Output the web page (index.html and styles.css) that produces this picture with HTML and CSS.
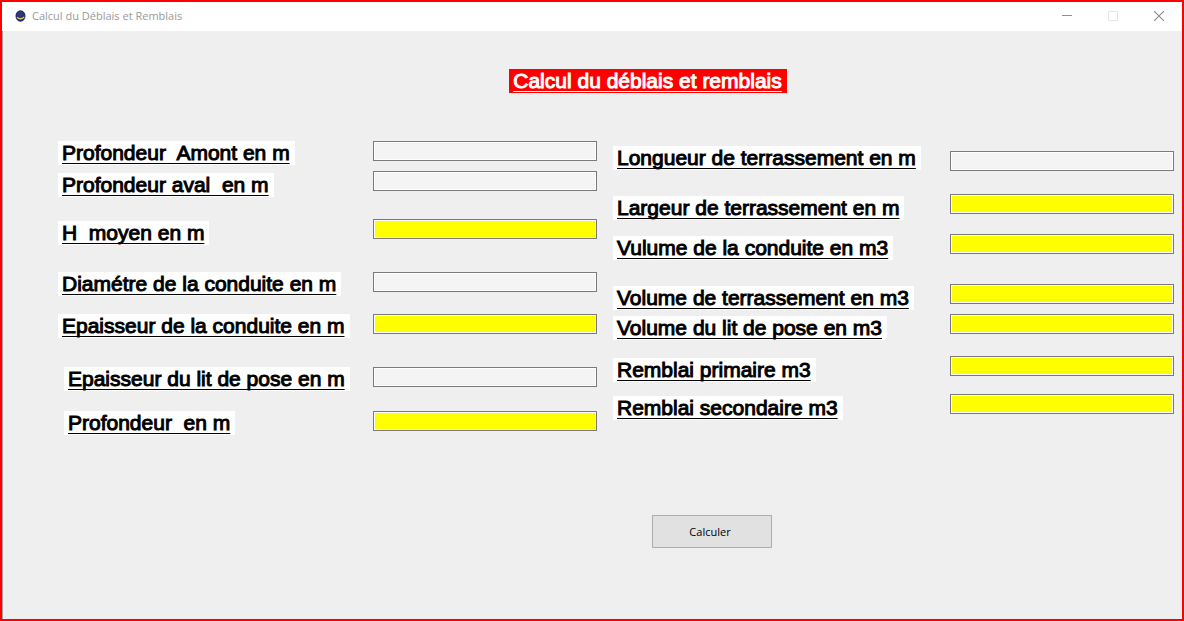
FILE: index.html
```html
<!DOCTYPE html>
<html lang="fr">
<head>
<meta charset="utf-8">
<title>Calcul du Déblais et Remblais</title>
<link rel="stylesheet" href="styles.css">
</head>
<body>
<div class="window">
  <header class="titlebar">
    <svg class="app-icon" viewBox="0 0 11 12" aria-hidden="true">
      <ellipse cx="5.5" cy="6" rx="5" ry="5.8" fill="#2a2a7c"/>
      <circle cx="5.3" cy="4.6" r="2.8" fill="#23406e"/>
      <path d="M2 7.2Q5.5 10.4 9.2 7" fill="none" stroke="#e0cc50" stroke-width="1.2"/>
    </svg>
    <span class="caption">Calcul du Déblais et Remblais</span>
    <div class="controls">
      <button class="control" type="button" aria-label="Réduire"><svg viewBox="0 0 10 10"><path d="M0 4.5H10" stroke="#8f8f8f"/></svg></button>
      <button class="control" type="button" aria-label="Agrandir" disabled><svg viewBox="0 0 10 10"><path d="M.5.5H9.5V9.5H.5Z" fill="none" stroke="#e6e6e6"/></svg></button>
      <button class="control" type="button" aria-label="Fermer"><svg viewBox="0 0 10 10"><path d="M0 0L10 10M10 0L0 10" stroke="#8a8a8a" stroke-width="1.1"/></svg></button>
    </div>
  </header>
  <main class="content">
    <h1 class="tag heading">Calcul du déblais et remblais</h1>
    <form class="form">
      <div class="columns">
        <div class="fields fields-depth">
          <div class="row"><label class="tag" for="amont">Profondeur  Amont en m</label><input class="box" id="amont" type="text"></div>
          <div class="row lowered"><label class="tag" for="aval">Profondeur aval  en m</label><input class="box" id="aval" type="text"></div>
          <div class="row lowered"><label class="tag" for="moyen">H  moyen en m</label><input class="box result" id="moyen" type="text" readonly></div>
          <div class="row"><label class="tag" for="diametre">Diamétre de la conduite en m</label><input class="box" id="diametre" type="text"></div>
          <div class="row"><label class="tag" for="epaisseur">Epaisseur de la conduite en m</label><input class="box result" id="epaisseur" type="text" readonly></div>
          <div class="row indented"><label class="tag" for="lit">Epaisseur du lit de pose en m</label><input class="box" id="lit" type="text"></div>
          <div class="row indented"><label class="tag" for="profondeur">Profondeur  en m</label><input class="box result" id="profondeur" type="text" readonly></div>
        </div>
        <div class="fields fields-volume">
          <div class="row first"><label class="tag" for="longueur">Longueur de terrassement en m</label><input class="box" id="longueur" type="text"></div>
          <div class="row lowered"><label class="tag" for="largeur">Largeur de terrassement en m</label><input class="box result" id="largeur" type="text" readonly></div>
          <div class="row lowered"><label class="tag" for="vconduite">Vulume de la conduite en m3</label><input class="box result" id="vconduite" type="text" readonly></div>
          <div class="row lowered"><label class="tag" for="vterrassement">Volume de terrassement en m3</label><input class="box result" id="vterrassement" type="text" readonly></div>
          <div class="row lowered"><label class="tag" for="vlit">Volume du lit de pose en m3</label><input class="box result" id="vlit" type="text" readonly></div>
          <div class="row lowered"><label class="tag" for="primaire">Remblai primaire m3</label><input class="box result" id="primaire" type="text" readonly></div>
          <div class="row lowered"><label class="tag" for="secondaire">Remblai secondaire m3</label><input class="box result" id="secondaire" type="text" readonly></div>
        </div>
      </div>
      <button class="submit" type="button">Calculer</button>
    </form>
  </main>
</div>
</body>
</html>
```
FILE: styles.css
```css
* { box-sizing: border-box; }

body {
  margin: 0;
  font-family: "Liberation Sans", Arial, sans-serif;
}

.window {
  display: flex;
  flex-direction: column;
  min-height: 100vh;
  border: 2px solid #ff0000;
  background: #efefef;
}

.titlebar {
  display: flex;
  align-items: center;
  height: 29px;
  padding: 0 0 2px 13px;
  background: #ffffff;
}

.app-icon {
  width: 11px;
  height: 12px;
  margin-right: 6px;
}

.caption {
  color: #999999;
  font: 11px/16px "Open Sans", "Noto Sans", sans-serif;
}

.controls {
  display: flex;
  margin-left: auto;
}

.control {
  display: flex;
  align-items: center;
  justify-content: center;
  width: 46px;
  height: 26px;
  padding: 0;
  border: 0;
  background: transparent;
}

.control svg {
  width: 10px;
  height: 10px;
}

.content {
  flex: 1;
  display: flex;
  flex-direction: column;
  align-items: center;
  padding: 38px 8px 24px 55px;
  border-left: 1px solid #a0a0a0;
}

.tag {
  padding: 0 5px 0 4px;
  background: #ffffff;
  color: #000000;
  font-size: 21px;
  font-weight: normal;
  line-height: 24px;
  white-space: pre;
  text-decoration: underline 1px;
  text-decoration-skip-ink: none;
  text-underline-offset: 3px;
  -webkit-text-stroke: 1px currentColor;
}

.heading {
  margin: 0 0 48px;
  margin-right: 56px;
  margin-left: 120px;
  background: #ff0000;
  color: #ffffff;
}

.form {
  display: flex;
  flex-direction: column;
  align-items: center;
  width: 100%;
}

.columns {
  display: grid;
  grid-template-columns: 539fr 561fr;
  gap: 16px;
  width: 100%;
}

.fields {
  display: grid;
  align-content: start;
}

.fields-depth { grid-template-rows: 30px 48px 53px 42px 53px 44px 24px; }

.fields-volume {
  grid-template-rows: 48px 40px 50px 30px 42px 38px 26px;
  padding-top: 5px;
}

.row {
  display: flex;
  align-items: flex-start;
  justify-content: space-between;
}

.lowered .tag { margin-top: 2px; }

.indented .tag { margin-left: 6px; }

.first .box { margin-top: 5px; }

.box {
  flex: none;
  width: 224px;
  height: 20px;
  padding: 0 3px;
  border: 1px solid #7a7a7a;
  outline: none;
  background: #f4f4f4;
  box-shadow: inset 0 0 0 1px #ffffff;
  font-size: 12px;
}

.result { background: #ffff00; }

.submit {
  width: 120px;
  height: 33px;
  margin: 80px 0 0 191px;
  padding: 0 3px 0 0;
  border: 1px solid #adadad;
  background: #e1e1e1;
  color: #000000;
  font: 11px "Open Sans", "Noto Sans", sans-serif;
}
```
